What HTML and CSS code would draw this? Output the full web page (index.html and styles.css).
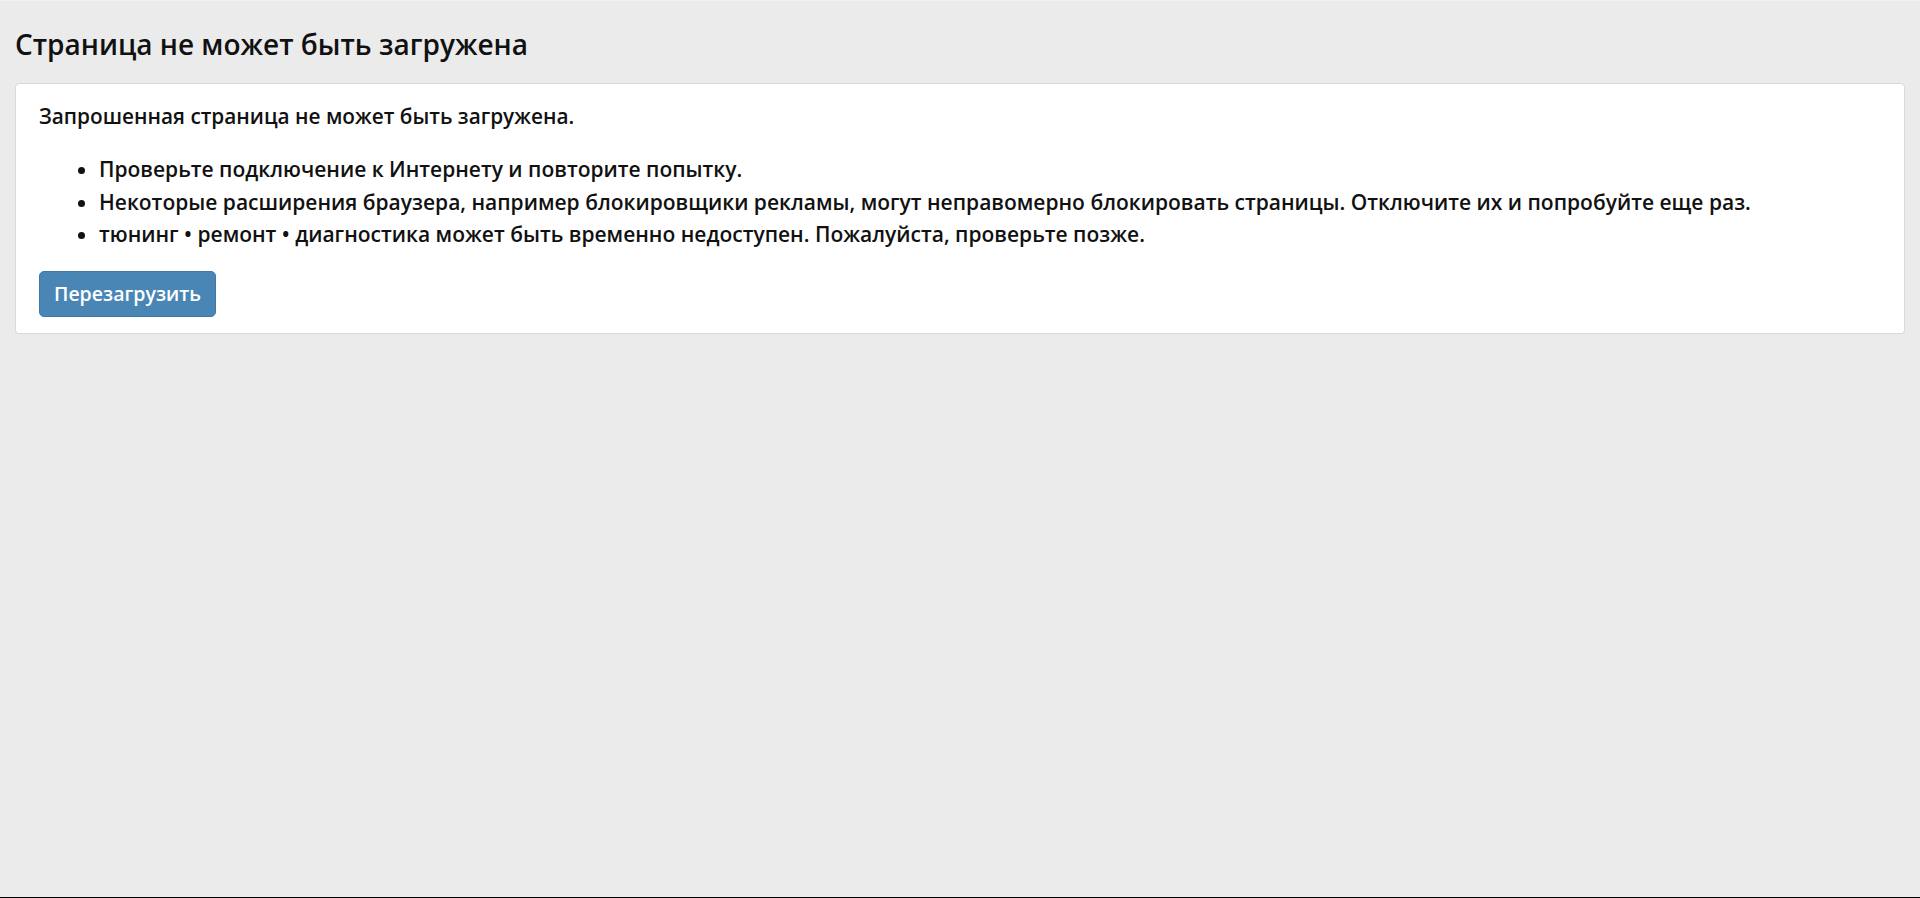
FILE: index.html
```html
<!DOCTYPE html>
<html lang="ru">
<head>
  <meta charset="UTF-8" />
  <meta name="viewport" content="width=device-width, initial-scale=1.0"/>
  <title>Страница не может быть загружена</title>
  <link rel="stylesheet" href="styles.css">
</head>
<body>
  <div class="page">
    <h1 class="title">Страница не может быть загружена</h1>

    <div class="error-box">
      <p class="lead">Запрошенная страница не может быть загружена.</p>
      <ul class="hints">
        <li>Проверьте подключение к Интернету и повторите попытку.</li>
        <li>Некоторые расширения браузера, например блокировщики рекламы, могут неправомерно блокировать страницы. Отключите их и попробуйте еще раз.</li>
        <li>тюнинг • ремонт • диагностика может быть временно недоступен. Пожалуйста, проверьте позже.</li>
      </ul>
      <button class="reload-btn" type="button">Перезагрузить</button>
    </div>
  </div>
</body>
</html>
```

FILE: styles.css
```css
html {
  height: 100%;
}

body {
  font-family: "Open Sans", "Noto Sans", sans-serif;
  background: #ebebeb;
  color: #111;
  margin: 0;
  min-height: 100%;
  box-sizing: border-box;
  border-top: 1px solid #f2f2f2;
  border-bottom: 1px solid #000;
}

.page {
  padding: 0 15px;
}

.title {
  font-size: 28px;
  font-weight: 600;
  line-height: 36px;
  margin: 0;
  padding: 25px 0 21px;
}

.error-box {
  background: #ffffff;
  border: 1px solid #d9d9d9;
  border-radius: 4px;
  padding: 18px 23px 16px;
}

.lead {
  font-size: 20.8px;
  font-weight: 600;
  line-height: 28px;
  margin: 0 0 23px;
}

.hints {
  font-size: 21px;
  font-weight: 600;
  line-height: 32.5px;
  margin: 0 0 20px;
  padding-left: 60px;
}

.reload-btn {
  font-family: inherit;
  font-size: 19.5px;
  font-weight: 600;
  color: #ffffff;
  background: #4a86b5;
  border: 1px solid #4079a6;
  border-radius: 5px;
  height: 46px;
  width: 177px;
  padding: 0;
  cursor: pointer;
}
```
